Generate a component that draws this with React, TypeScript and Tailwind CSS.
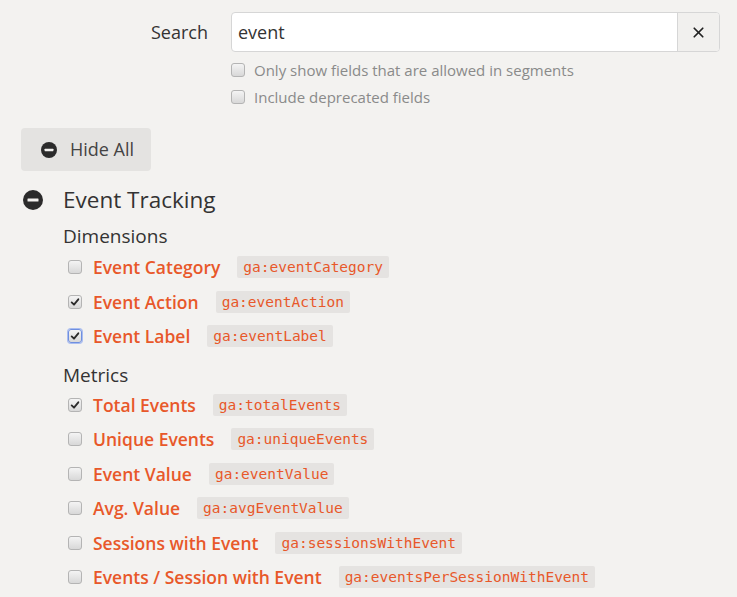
import { X } from 'lucide-react';

type Field = { label: string; code: string; checked?: boolean; focused?: boolean };

const dimensions: Field[] = [
  { label: 'Event Category', code: 'ga:eventCategory' },
  { label: 'Event Action', code: 'ga:eventAction', checked: true },
  { label: 'Event Label', code: 'ga:eventLabel', checked: true, focused: true },
];

const metrics: Field[] = [
  { label: 'Total Events', code: 'ga:totalEvents', checked: true },
  { label: 'Unique Events', code: 'ga:uniqueEvents' },
  { label: 'Event Value', code: 'ga:eventValue' },
  { label: 'Avg. Value', code: 'ga:avgEventValue' },
  { label: 'Sessions with Event', code: 'ga:sessionsWithEvent' },
  { label: 'Events / Session with Event', code: 'ga:eventsPerSessionWithEvent' },
];

function Box({ checked, focused }: { checked?: boolean; focused?: boolean }) {
  return (
    <span
      className={
        'relative flex h-[14px] w-[14px] shrink-0 items-center justify-center rounded-[3px] border bg-gradient-to-b from-[#f4f4f4] to-[#d8d8d8] ' +
        (focused ? 'border-[#6f8fe0] ring-1 ring-[#a9bdf0]' : 'border-[#b4b4b4]')
      }
    >
      {checked && (
        <svg viewBox="0 0 12 12" className="h-[10px] w-[10px]">
          <path d="M2 6.5 L4.8 9.2 L10 2.8" fill="none" stroke="#2b2b2b" strokeWidth="2.2" strokeLinecap="round" strokeLinejoin="round" />
        </svg>
      )}
    </span>
  );
}

function MinusCircle({ size }: { size: number }) {
  return (
    <svg viewBox="0 0 20 20" width={size} height={size}>
      <circle cx="10" cy="10" r="10" fill="#2b2b2b" />
      <rect x="4.5" y="8.5" width="11" height="3" rx="0.5" fill="#f3f2f0" />
    </svg>
  );
}

function Row({ f }: { f: Field }) {
  return (
    <div className="flex h-[34.5px] items-center">
      <div className="ml-[68px] flex items-center">
        <Box checked={f.checked} focused={f.focused} />
      </div>
      <span className="ml-[11px] text-[17.5px] font-semibold text-[#e8582a]">{f.label}</span>
      <code className="ml-[17px] rounded-[2px] bg-[#e5e3e1] px-[6px] font-['DejaVu_Sans_Mono',monospace] text-[14.5px] leading-[22px] text-[#e8582a]">
        {f.code}
      </code>
    </div>
  );
}

export default function App() {
  return (
    <div className="h-[597px] w-[737px] overflow-hidden bg-[#f3f2f0] font-['Open_Sans',sans-serif] text-[#333]">
      {/* Search */}
      <div className="flex items-center pt-[12px]">
        <label className="w-[208px] text-right text-[18px] text-[#333]">Search</label>
        <div className="ml-[23px] flex h-[40px] w-[489px] overflow-hidden rounded-[4px] border border-[#d6d6d6] bg-white">
          <div className="flex flex-1 items-center px-[6px] text-[18px] text-[#333]">event</div>
          <div className="flex w-[42px] items-center justify-center border-l border-[#d6d6d6] bg-[#f1f0ee]">
            <X className="h-[17px] w-[17px] text-[#222]" strokeWidth={2.4} />
          </div>
        </div>
      </div>
      <div className="ml-[231px] mt-[8px] flex flex-col gap-[7px] text-[15px] text-[#8a8a8a]">
        <div className="flex h-[20px] items-center gap-[9px]">
          <Box />
          <span>Only show fields that are allowed in segments</span>
        </div>
        <div className="flex h-[20px] items-center gap-[9px]">
          <Box />
          <span>Include deprecated fields</span>
        </div>
      </div>

      {/* Hide all */}
      <button className="ml-[21px] mt-[21px] flex h-[43px] w-[130px] items-center rounded-[4px] bg-[#e4e3e1] pl-[20px] text-[18px] text-[#444]">
        <MinusCircle size={16} />
        <span className="ml-[13px]">Hide All</span>
      </button>

      {/* Group */}
      <div className="mt-[15px] flex h-[27px] items-center">
        <div className="ml-[23px]">
          <MinusCircle size={20} />
        </div>
        <span className="ml-[20px] text-[22.5px] text-[#333]">Event Tracking</span>
      </div>
      <div className="ml-[63px] mt-[11px] text-[19px] leading-[24px] text-[#333]">Dimensions</div>
      <div className="mt-[2px]">
        {dimensions.map((f) => (
          <Row key={f.code} f={f} />
        ))}
      </div>
      <div className="ml-[63px] mt-[9px] text-[19px] leading-[24px] text-[#333]">Metrics</div>
      <div className="mt-[1px]">
        {metrics.map((f) => (
          <Row key={f.code} f={f} />
        ))}
      </div>
    </div>
  );
}
